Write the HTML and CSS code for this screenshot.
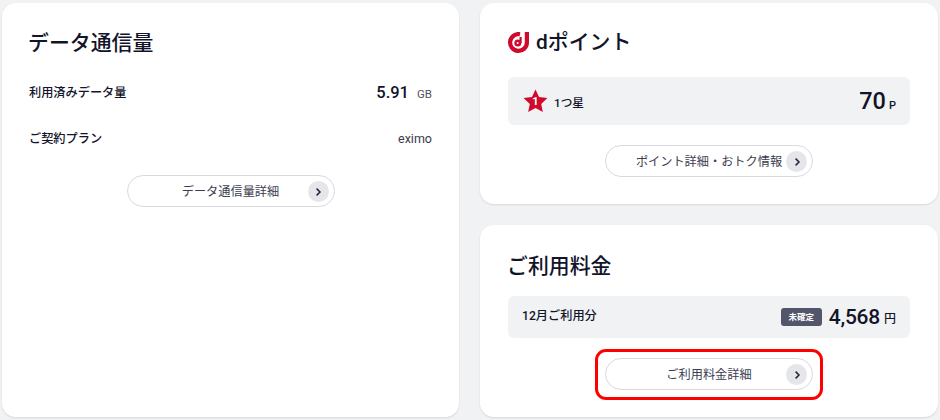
FILE: index.html
```html
<!DOCTYPE html>
<html lang="ja">
<head>
<meta charset="utf-8">
<title>ご利用状況</title>
<link rel="stylesheet" href="styles.css">
</head>
<body>
<main class="page">
  <section class="card card-data">
    <h2 class="title title-data">データ通信量</h2>
    <div class="row row-used">
      <span class="label">利用済みデータ量</span>
      <span class="value"><b class="num-data">5.91</b><span class="unit-gb">GB</span></span>
    </div>
    <div class="row row-plan">
      <span class="label">ご契約プラン</span>
      <span class="plan">eximo</span>
    </div>
    <div class="btn-wrap btn-wrap-data">
      <a class="btn">データ通信量詳細<span class="btn-arrow"><svg viewBox="0 0 10 10" width="10" height="10"><path d="M3.6 1.6 7 5 3.6 8.4" fill="none" stroke="#23253a" stroke-width="1.5"/></svg></span></a>
    </div>
  </section>
  <div class="col">
    <section class="card card-point">
      <h2 class="title title-point">
        <svg class="d-logo" viewBox="0 0 21 21" width="21" height="21"><path fill="none" stroke="#cf0a2c" stroke-width="4.2" d="M12 2.2A8.4 8.4 0 1 0 18.9 10.5V0"/><circle cx="9.8" cy="11" r="3.5" fill="#cf0a2c"/><circle cx="9.6" cy="11" r="1" fill="#fff"/><path fill="none" stroke="#cf0a2c" stroke-width="2.2" d="M12.6 11V5"/></svg>
        dポイント
      </h2>
      <div class="box box-point">
        <span class="rank">
          <span class="star"><svg viewBox="0 0 25 24" width="25" height="24"><path fill="#cf0a2c" d="M12.5.5 16 8.1 24.4 9.1 18.2 14.9 19.85 23.1 12.5 19 5.15 23.1 6.8 14.9.6 9.1 9 8.1z"/></svg><span class="star-num">1</span></span>
          <span class="rank-text">1つ星</span>
        </span>
        <span class="value"><b class="num-point">70</b><span class="unit-p">P</span></span>
      </div>
      <div class="btn-wrap btn-wrap-point">
        <a class="btn">ポイント詳細・おトク情報<span class="btn-arrow"><svg viewBox="0 0 10 10" width="10" height="10"><path d="M3.6 1.6 7 5 3.6 8.4" fill="none" stroke="#23253a" stroke-width="1.5"/></svg></span></a>
      </div>
    </section>
    <section class="card card-fee">
      <h2 class="title title-fee">ご利用料金</h2>
      <div class="box box-fee">
        <span class="label">12月ご利用分</span>
        <span class="value fee-value"><span class="badge">未確定</span><b class="num-fee">4,568</b><span class="unit-yen">円</span></span>
      </div>
      <div class="btn-wrap btn-wrap-fee">
        <a class="btn btn-highlight">ご利用料金詳細<span class="btn-arrow"><svg viewBox="0 0 10 10" width="10" height="10"><path d="M3.6 1.6 7 5 3.6 8.4" fill="none" stroke="#23253a" stroke-width="1.5"/></svg></span></a>
      </div>
    </section>
  </div>
</main>
</body>
</html>
```

FILE: styles.css
```css
* { box-sizing: border-box; }
html, body { margin: 0; height: 100%; }
body {
  background: #f1f2f4;
  color: #12142a;
  font-family: Roboto, "Noto Sans CJK JP", sans-serif;
  overflow: hidden;
}
.page {
  width: 940px;
  height: 420px;
  padding: 3px 2px;
  display: grid;
  grid-template-columns: 457px 458px;
  column-gap: 21px;
}
.col {
  display: grid;
  grid-template-rows: 201px 192px;
  row-gap: 21px;
}
.card {
  background: #fff;
  border-radius: 14px;
  box-shadow: 0 1px 2px rgba(30, 32, 50, .12);
  padding: 0 28px;
}
.card-data { padding: 0 27px; }
.title {
  margin: 0;
  font-size: 20.9px;
  line-height: 30px;
  font-weight: 500;
  display: flex;
  align-items: center;
}
.title-data { padding-top: 25px; margin-left: -1px; }
.title-point { padding-top: 24px; }
.title-fee { padding-top: 26px; margin-left: -1px; }
.d-logo { margin-right: 7px; flex: none; }
.row {
  display: flex;
  justify-content: space-between;
  align-items: center;
}
.row-used { margin-top: 23px; height: 22px; }
.row-plan { margin-top: 24px; height: 22px; }
.label { font-size: 12.2px; font-weight: 500; }
.value { display: flex; align-items: baseline; }
.num-data { font-size: 16.5px; font-weight: 500; }
.unit-gb { font-size: 11.5px; margin-left: 8px; color: #50525f; }
.plan { font-size: 12.5px; color: #3a3c4c; }
.box {
  background: #f1f2f4;
  border-radius: 6px;
  display: flex;
  justify-content: space-between;
  align-items: center;
}
.box-point { margin-top: 20px; height: 48px; padding: 0 14px 0 15px; }
.rank { display: flex; align-items: center; }
.star { position: relative; width: 25px; height: 24px; display: block; }
.star svg { display: block; }
.star-num {
  position: absolute;
  left: 0;
  right: 0;
  top: 7px;
  text-align: center;
  color: #fff;
  font-size: 11px;
  line-height: 12px;
  font-weight: 700;
}
.rank-text { margin-left: 6px; font-size: 11.7px; font-weight: 500; }
.num-point { font-size: 23.5px; font-weight: 500; }
.unit-p { font-size: 11px; font-weight: 500; margin-left: 3px; }
.box-fee { margin-top: 15px; height: 42px; padding: 0 14px; }
.box-fee .label { margin-top: -4px; }
.fee-value { align-items: center; }
.badge {
  background: #53566b;
  color: #fff;
  border-radius: 3px;
  width: 41px;
  height: 18px;
  font-size: 8.5px;
  line-height: 18px;
  font-weight: 700;
  text-align: center;
}
.num-fee { font-size: 21px; font-weight: 500; margin-left: 7px; letter-spacing: -.25px; }
.unit-yen { font-size: 12px; font-weight: 500; margin-left: 4px; }
.btn-wrap { display: flex; justify-content: center; }
.btn-wrap-data { margin-top: 26px; }
.btn-wrap-point { margin-top: 20px; }
.btn-wrap-fee { margin-top: 20px; }
.btn {
  position: relative;
  width: 208px;
  height: 32px;
  border: 1px solid #d9dae0;
  border-radius: 16px;
  background: #fff;
  display: flex;
  align-items: center;
  justify-content: center;
  font-size: 12.2px;
  color: #3b3d50;
}
.btn-arrow {
  position: absolute;
  right: 5px;
  top: 5px;
  width: 21px;
  height: 21px;
  border-radius: 50%;
  background: #e5e6ea;
  display: flex;
  align-items: center;
  justify-content: center;
}
.btn-highlight::after {
  content: "";
  position: absolute;
  left: -11px;
  right: -11px;
  top: -10px;
  bottom: -11px;
  border: 3px solid #f00;
  border-radius: 11px;
}
```
